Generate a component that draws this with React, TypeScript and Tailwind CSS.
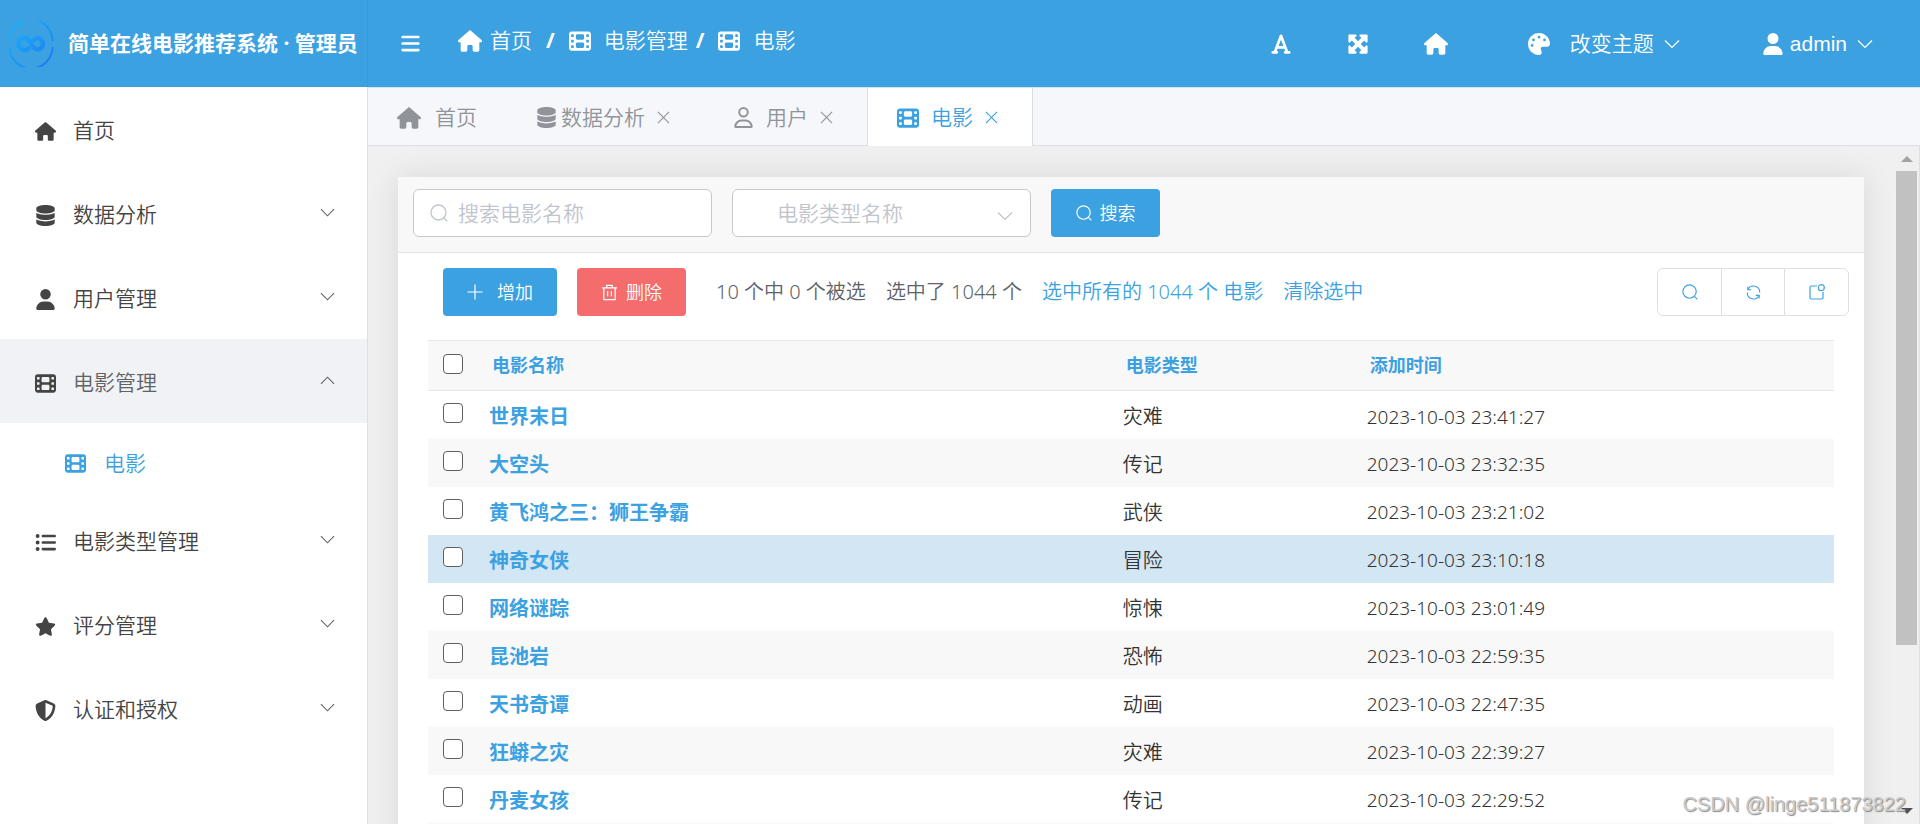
import React from "react";
import {
	FaBars,
	FaDatabase,
	FaFilm,
	FaFont,
	FaHouse,
	FaListUl,
	FaMaximize,
	FaPalette,
	FaRegUser,
	FaShieldHalved,
	FaStar,
	FaUser,
} from "react-icons/fa6";

type IconProps = { className?: string };

const ChevronIcon: React.FC<IconProps> = ({ className }) => (
	<svg viewBox="0 0 16 16" fill="none" stroke="currentColor" strokeWidth="1.2" className={className}>
		<path d="M1 4.5 8 11.5 15 4.5" />
	</svg>
);

const CloseIcon: React.FC<IconProps> = ({ className }) => (
	<svg viewBox="0 0 14 14" fill="none" stroke="currentColor" strokeWidth="1.2" className={className}>
		<path d="M1 1 13 13M13 1 1 13" />
	</svg>
);

const SearchIcon: React.FC<IconProps> = ({ className }) => (
	<svg viewBox="0 0 18 18" fill="none" stroke="currentColor" strokeWidth="1.3" className={className}>
		<circle cx="8.5" cy="8.5" r="7.5" />
		<path d="M14 14 17.2 17.2" />
	</svg>
);

const PlusIcon: React.FC<IconProps> = ({ className }) => (
	<svg viewBox="0 0 16 16" fill="none" stroke="currentColor" strokeWidth="1.2" className={className}>
		<path d="M8 .5V15.5M.5 8H15.5" />
	</svg>
);

const TrashIcon: React.FC<IconProps> = ({ className }) => (
	<svg viewBox="0 0 18 18" fill="none" stroke="currentColor" strokeWidth="1.3" className={className}>
		<path d="M1 4H17M6 4V1.5H12V4M3 4V16.5H15V4M7 7.5V13M11 7.5V13" />
	</svg>
);

const RefreshIcon: React.FC<IconProps> = ({ className }) => (
	<svg viewBox="0 0 16 16" fill="none" stroke="currentColor" strokeWidth="1.2" className={className}>
		<path d="M2 5A6.6 6.6 0 0 1 14.6 8M14 11A6.6 6.6 0 0 1 1.4 8" />
		<path d="M2 1.5V5H5.5M14 14.5V11H10.5" />
	</svg>
);

const ExportIcon: React.FC<IconProps> = ({ className }) => (
	<svg viewBox="0 0 16 16" fill="none" stroke="currentColor" strokeWidth="1.2" className={className}>
		<path d="M8 2H2.2Q1 2 1 3.2V13.8Q1 15 2.2 15H12.8Q14 15 14 13.8V8" />
		<circle cx="12.3" cy="3.7" r="3" />
	</svg>
);

const Logo: React.FC<IconProps> = ({ className }) => (
	<svg viewBox="0 0 46 46" fill="none" className={className}>
		<defs>
			<linearGradient id="logo" x1="0" y1="0" x2="46" y2="46" gradientUnits="userSpaceOnUse">
				<stop offset="0.1" stopColor="#18b4fa" />
				<stop offset="0.9" stopColor="#1f7af5" />
			</linearGradient>
		</defs>
		<path
			d="M1.500 20A21.500 21.500 0 0 1 44.500 20M1.500 26A21.500 21.500 0 0 0 44.500 26"
			stroke="url(#logo)"
			strokeWidth="2"
		/>
		<path
			d="M20.500 27.500A6 6 0 1 1 20.500 18.500L25.500 26.500A5.500 5.500 0 1 0 26 18.500"
			stroke="url(#logo)"
			strokeWidth="4.500"
			strokeLinecap="round"
			strokeLinejoin="round"
		/>
	</svg>
);

const menu = [
	{ label: "首页", icon: FaHouse },
	{ label: "数据分析", icon: FaDatabase, group: true },
	{ label: "用户管理", icon: FaUser, group: true },
	{ label: "电影管理", icon: FaFilm, group: true, open: true },
	{ label: "电影类型管理", icon: FaListUl, group: true },
	{ label: "评分管理", icon: FaStar, group: true },
	{ label: "认证和授权", icon: FaShieldHalved, group: true },
];

const movies = [
	{ name: "世界末日", type: "灾难", time: "2023-10-03 23:41:27" },
	{ name: "大空头", type: "传记", time: "2023-10-03 23:32:35" },
	{ name: "黄飞鸿之三：狮王争霸", type: "武侠", time: "2023-10-03 23:21:02" },
	{ name: "神奇女侠", type: "冒险", time: "2023-10-03 23:10:18", hover: true },
	{ name: "网络谜踪", type: "惊悚", time: "2023-10-03 23:01:49" },
	{ name: "昆池岩", type: "恐怖", time: "2023-10-03 22:59:35" },
	{ name: "天书奇谭", type: "动画", time: "2023-10-03 22:47:35" },
	{ name: "狂蟒之灾", type: "灾难", time: "2023-10-03 22:39:27" },
	{ name: "丹麦女孩", type: "传记", time: "2023-10-03 22:29:52" },
];

const checkbox =
	"block size-5 -mt-1 appearance-none rounded-[4px] border border-[#5f5f5f] bg-white";

const Sidebar: React.FC = () => {
	return (
		<aside className="w-[368px] shrink-0 bg-white text-[21px] text-[#444]">
			<div className="flex h-[87px] items-center gap-[14px] border-r border-[#3a9ad8] bg-[#3ca1e0] pl-2">
				<Logo className="size-[46px] shrink-0" />
				<h1 className="whitespace-nowrap font-bold text-white">简单在线电影推荐系统 · 管理员</h1>
			</div>
			<nav className="h-full border-r border-[#dcdfe6]">
				{menu.map(({ label, icon: Icon, group, open }) => (
					<div key={label}>
						<button
							className={
								open
									? "flex h-[84px] w-full items-center bg-[#f0f2f5] pr-8 text-left text-[#606266]"
									: "flex h-[84px] w-full items-center pr-8 text-left"
							}
						>
							<span className="flex flex-1 items-center pt-1">
								<span className="flex w-[73px] justify-center pr-[2px] pl-[19px]">
									<Icon className="size-[21px] text-[#444]" />
								</span>
								{label}
							</span>
							{group && (
								<ChevronIcon
									className={
										open
											? "mb-[2px] size-[15px] rotate-180 text-[#606266]"
											: "mb-[2px] size-[15px] text-[#606266]"
									}
								/>
							)}
						</button>
						{open && (
							<a href="#movie" className="flex h-[75px] items-center gap-[18px] pt-[6px] pl-[65px] text-[#3ca1e0]">
								<FaFilm className="size-[21px]" />
								电影
							</a>
						)}
					</div>
				))}
			</nav>
		</aside>
	);
};

const Header: React.FC = () => {
	return (
		<header className="flex h-[87px] items-center justify-between bg-[#3ca1e0] pr-[47px] pl-8 text-[21px] text-white">
			<div className="flex items-center">
				<button aria-label="菜单">
					<FaBars className="size-[21px]" />
				</button>
				<nav className="flex items-center pb-[6px] pl-[37px]">
					<FaHouse className="size-6" />
					<a href="#home" className="pl-2">首页</a>
					<span className="px-[14px] font-bold">/</span>
					<FaFilm className="size-[22px]" />
					<a href="#movies" className="pl-[13px]">电影管理</a>
					<span className="pr-[14px] pl-2 font-bold">/</span>
					<FaFilm className="size-[22px]" />
					<a href="#movie" className="pl-[13px]">电影</a>
				</nav>
			</div>
			<div className="flex items-center">
				<button aria-label="字体">
					<FaFont className="size-[22px]" />
				</button>
				<button aria-label="全屏" className="pl-[55px]">
					<FaMaximize className="size-[22px]" />
				</button>
				<button aria-label="首页" className="pl-[55px]">
					<FaHouse className="size-6" />
				</button>
				<button className="flex items-center pl-20">
					<FaPalette className="size-[22px]" />
					<span className="px-5">
						改变主题
					</span>
					<ChevronIcon className="-ml-[10px] size-4" />
				</button>
				<button className="flex items-center pl-[82px]">
					<FaUser className="size-[22px]" />
					<span className="pr-[10px] pl-[6px] font-['Liberation_Sans',sans-serif]">admin</span>
					<ChevronIcon className="size-4" />
				</button>
			</div>
		</header>
	);
};

const tab = "flex items-center pt-[2px] pr-[34px] pl-[29px]";

const Tabs: React.FC = () => {
	return (
		<nav className="flex h-[59px] shrink-0 border-t border-b border-[#dcdfe6] bg-[#f5f7fa] text-[21px] text-[#909399]">
			<button className="flex items-center gap-[14px] pt-[2px] pr-[30px] pl-[29px]">
				<FaHouse className="size-6" />
				首页
			</button>
			<button className={tab}>
				<FaDatabase className="mr-1 size-[21px]" />
				数据分析
				<CloseIcon className="ml-3 size-[13px]" />
			</button>
			<button className={tab}>
				<FaRegUser className="mr-3 size-[21px]" />
				用户
				<CloseIcon className="ml-3 size-[13px]" />
			</button>
			<button className="-mb-[2px] flex items-center border-x border-[#dcdfe6] bg-white pr-[34px] pl-[29px] text-[#3ca1e0]">
				<FaFilm className="mr-3 size-[22px]" />
				电影
				<CloseIcon className="ml-3 size-[13px]" />
			</button>
		</nav>
	);
};

const MovieTable: React.FC = () => {
	return (
		<table className="w-full table-fixed text-left text-[20px] text-[#333]">
			<colgroup>
				<col className="w-[50px]" />
				<col className="w-[45%]" />
				<col className="w-[244px]" />
				<col />
			</colgroup>
			<thead>
				<tr className="h-[50px] border-y border-[#e6e6e6] bg-[#f8f8f8] text-[18px] text-[#3ca1e0]">
					<th className="pl-[15px]">
						<input type="checkbox" aria-label="全选" className={checkbox} />
					</th>
					<th className="pl-[14px]">电影名称</th>
					<th className="pl-[15px]">电影类型</th>
					<th className="pl-[15px]">添加时间</th>
				</tr>
			</thead>
			<tbody>
				{movies.map((movie) => (
					<tr
						key={movie.name}
						className={movie.hover ? "h-12 bg-[#d3e6f4]" : "h-12 even:bg-[#f8f8f8]"}
					>
						<td className="pl-[15px]">
							<input type="checkbox" aria-label={movie.name} className={checkbox} />
						</td>
						<td className="pt-1 pl-[11px]">
							<a href="#detail" className="font-bold text-[#3ca1e0]">{movie.name}</a>
						</td>
						<td className="pt-1 pl-3">{movie.type}</td>
						<td className="pt-1 pl-3 text-[19px]">{movie.time}</td>
					</tr>
				))}
				<tr className="h-12 bg-[#f8f8f8]">
					<td colSpan={4} />
				</tr>
			</tbody>
		</table>
	);
};

const App: React.FC = () => {
	return (
		<div className="relative flex h-screen overflow-hidden font-['Noto_Sans','Noto_Sans_CJK_SC',sans-serif] font-[350]">
			<Sidebar />
			<div className="flex min-w-0 flex-1 flex-col">
				<Header />
				<Tabs />
				<div className="flex min-h-0 flex-1 border-r border-[#dcdfe6] bg-[#f0f0f0]">
					<main className="min-w-0 flex-1 overflow-hidden pt-[31px] pr-8 pl-[30px]">
						<section className="bg-white shadow-[0_0_30px_rgba(0,0,0,0.1)]">
							<form className="flex h-[76px] items-start gap-5 border-b border-[#e6e6e6] bg-[#f8f8f8] px-[15px] pt-3">
								<label className="flex h-12 w-[299px] items-center rounded-md border border-[#c8c8c8] bg-white pl-4 text-[#c0c4cc]">
									<SearchIcon className="size-[18px] shrink-0" />
									<input
										type="text"
										aria-label="搜索电影名称"
										placeholder="搜索电影名称"
										className="w-full bg-transparent pt-[2px] pl-[10px] text-[21px] outline-none placeholder:text-[#c0c4cc]"
									/>
								</label>
								<div className="relative text-[#c0c4cc]">
									<select
										aria-label="电影类型名称"
										className="h-12 w-[299px] appearance-none rounded-md border border-[#c8c8c8] bg-white pt-[2px] pl-11 text-[21px]"
									>
										<option>电影类型名称</option>
									</select>
									<ChevronIcon className="pointer-events-none absolute top-[19px] right-[18px] size-4" />
								</div>
								<button
									type="button"
									className="flex h-12 w-[109px] items-center justify-center gap-2 rounded bg-[#3ca1e0] text-[18px] text-white"
								>
									<SearchIcon className="size-4" />
									搜索
								</button>
							</form>
							<div className="flex items-center pt-[15px] pr-[15px] pb-6 pl-[45px] text-[20px] text-[#606266]">
								<button className="flex h-12 w-[114px] items-center justify-center gap-[14px] rounded bg-[#3ca1e0] text-[18px] text-white">
									<PlusIcon className="size-4" />
									增加
								</button>
								<button className="ml-5 flex h-12 w-[109px] items-center justify-center gap-2 rounded bg-[#f56c6c] text-[18px] text-white">
									<TrashIcon className="size-[17px]" />
									删除
								</button>
								<span className="ml-[30px]">10 个中 0 个被选</span>
								<span className="ml-5">选中了 1044 个</span>
								<a href="#all" className="ml-5 text-[#3ca1e0]">选中所有的 1044 个 电影</a>
								<a href="#clear" className="ml-5 text-[#3ca1e0]">清除选中</a>
								<div className="ml-auto flex h-12 divide-x divide-[#dcdfe6] rounded-md border border-[#dcdfe6] text-[#3ca1e0]">
									<button aria-label="搜索" className="flex w-16 items-center justify-center">
										<SearchIcon className="size-4" />
									</button>
									<button aria-label="刷新" className="flex w-[63px] items-center justify-center">
										<RefreshIcon className="size-[15px]" />
									</button>
									<button aria-label="导出" className="flex w-[63px] items-center justify-center">
										<ExportIcon className="size-4" />
									</button>
								</div>
							</div>
							<div className="px-[30px]">
								<MovieTable />
							</div>
						</section>
					</main>
					<div className="flex w-[23px] flex-col items-center pt-[10px] pr-[2px] pb-[10px]">
						<svg viewBox="0 0 12 6" className="h-[6px] w-3 fill-[#a3a3a3]">
							<path d="M0 6 6 0 12 6Z" />
						</svg>
						<div className="mt-[9px] mb-auto h-[72%] w-[21px] bg-[#c1c1c1]" />
						<svg viewBox="0 0 12 6" className="h-[6px] w-3 fill-[#505050]">
							<path d="M0 0 6 6 12 0Z" />
						</svg>
					</div>
				</div>
			</div>
			<span className="absolute right-[14px] bottom-2 font-['Liberation_Sans',sans-serif] text-[20px] leading-6 font-normal text-[#ccc] [text-shadow:1px_1px_1px_#888]">
				CSDN @linge511873822
			</span>
		</div>
	);
};

export default App;
